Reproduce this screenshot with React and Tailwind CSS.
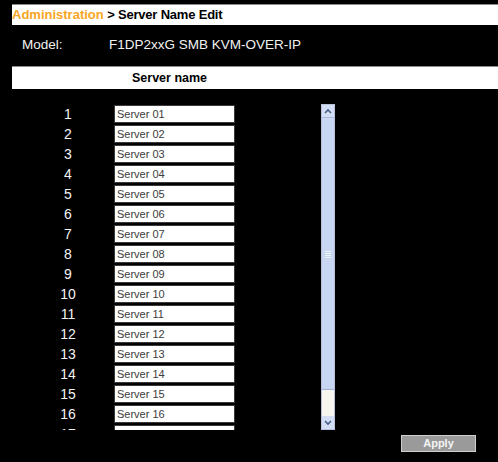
import React from "react";

const names = [
  "Server 01", "Server 02", "Server 03", "Server 04", "Server 05", "Server 06",
  "Server 07", "Server 08", "Server 09", "Server 10", "Server 11", "Server 12",
  "Server 13", "Server 14", "Server 15", "Server 16", "Telnet 01",
];

const Chevron = ({ up }) => (
  <svg width="8" height="6" viewBox="0 0 8 6">
    <path
      d={up ? "M1 5 L4 2 L7 5" : "M1 1 L4 4 L7 1"}
      fill="none"
      stroke="#4a5f86"
      strokeWidth="1.6"
    />
  </svg>
);

const ScrollBar = () => (
  <div className="flex h-full w-[14px] flex-col border border-[#b7c3dc] bg-[#f6f6ee]">
    <div className="flex h-[13px] items-center justify-center border-b border-[#a9b8d6] bg-[#d3ddf3]">
      <Chevron up />
    </div>
    <div className="relative h-[272px] border-b border-[#9eb0d4] bg-[#c9d6f2]">
      <div className="absolute left-[3px] top-[133px] flex w-[6px] flex-col gap-[1px]">
        <div className="h-px bg-[#eef2fb]" />
        <div className="h-px bg-[#eef2fb]" />
        <div className="h-px bg-[#eef2fb]" />
        <div className="h-px bg-[#eef2fb]" />
      </div>
    </div>
    <div className="flex-1" />
    <div className="flex h-[13px] items-center justify-center bg-[#d3ddf3]">
      <Chevron />
    </div>
  </div>
);

const App = () => {
  return (
    <div className="h-[462px] w-[498px] overflow-hidden bg-black pl-3 pt-1 font-['Liberation_Sans',Arial,sans-serif]">
      <div className="h-[21px] border-t border-[#8a8a8a] bg-white text-[13px] font-bold leading-[19px] text-black">
        <span className="text-[#f6a623]">Administration</span>
        <span className="tracking-[-0.2px]"> &gt; Server Name Edit</span>
      </div>

      <div className="flex h-[42px] items-center border-b border-[#8a8a8a] pl-[10px] text-[13.5px] text-[#f2f2f2]">
        <span className="w-[87px]">Model:</span>
        <span>F1DP2xxG SMB KVM-OVER-IP</span>
      </div>

      <div className="h-[22px] bg-white pl-[120px] text-[12.5px] font-bold leading-[22px] text-black">
        Server name
      </div>

      <div className="ml-[38px] mt-[15px] flex h-[326px]">
        <div className="w-[271px] overflow-hidden">
          {names.map((name, i) => (
            <div key={name} className="flex h-[20px] items-center">
              <span className="w-[36px] text-center text-[14px] text-[#f4f4f4]">{i + 1}</span>
              <input
                readOnly
                value={name}
                className="ml-[28px] h-[18px] w-[121px] border border-[#3a3a3a] bg-white pl-[2px] text-[11px] text-[#3c3c3c] outline-none"
              />
            </div>
          ))}
        </div>
        <ScrollBar />
      </div>

      <div className="mr-[22px] mt-[5px] flex justify-end">
        <button className="h-[17px] w-[75px] border border-[#cfcfcf] bg-[#9a9a9a] text-[11px] font-bold leading-[15px] text-[#f4f4f4]">
          Apply
        </button>
      </div>
    </div>
  );
};

export default App;
